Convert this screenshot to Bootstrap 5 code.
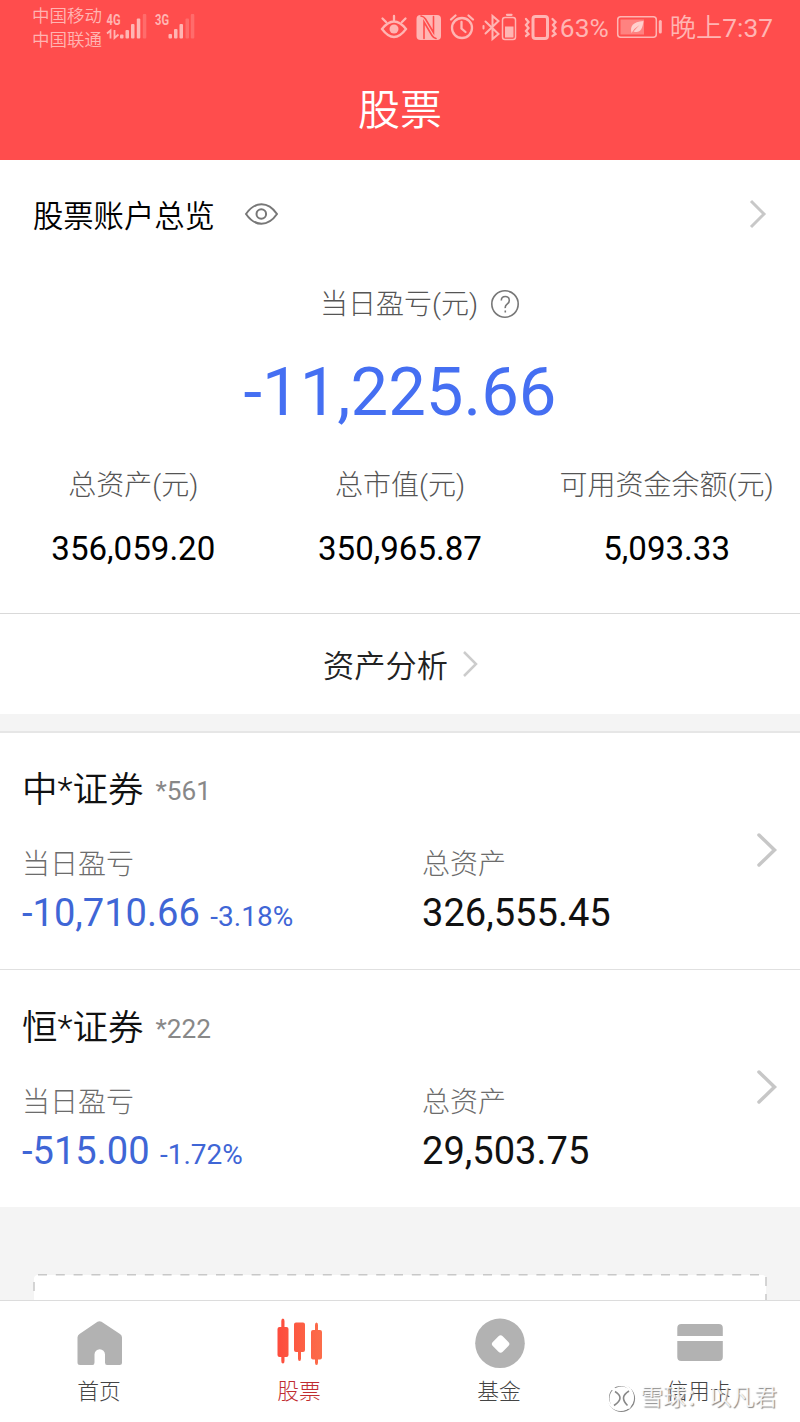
<!DOCTYPE html>
<html lang="zh-CN">
<head>
<meta charset="utf-8">
<meta name="viewport" content="width=device-width, initial-scale=1">
<title>股票</title>
<link href="https://cdn.jsdelivr.net/npm/bootstrap@5.3.0/dist/css/bootstrap.min.css" rel="stylesheet">
<style>
body{font-family:Roboto,"Noto Sans CJK SC",sans-serif;font-weight:350;color:#111;background:#f4f4f4;line-height:1}
svg{display:block;flex:none}
.screen{width:800px;height:1422px;overflow:hidden}
.topbar{height:160px;background:#ff4d4d}
.status{height:56px;color:#ffb5b3;padding:0 27px 0 32px}
.carriers{font-size:17.5px;line-height:24px;padding-top:4px}
.clock{font-size:26.3px;line-height:56px}
.num{font-weight:400}
.page-title{font-size:42px;line-height:60px;padding-top:25px;color:#fff;font-weight:350}
.overview{height:453px}
.overview-head{height:108px;padding:0 33px}
.overview-title{font-size:30.3px;line-height:40px;padding-top:5px;color:#000}
.daily{padding:19px 0 0 40px}
.daily svg{margin-left:12px}
.gray{color:#555}
.soft{color:#6c6c6c}
.label28{font-size:28px;line-height:36px;font-weight:300}
.total{font-size:67px;line-height:80px;font-weight:400;color:#456ff2;padding-top:29px}
.figures{padding-top:36px}
.amount{font-size:33.1px;line-height:40px;font-weight:400;color:#000;padding-top:25px}
.analysis{height:101px;border-top:1px solid #d9d9d9;font-size:31.2px;line-height:40px;color:#222}
.analysis span{padding:5px 0 0 2px}
.analysis svg{margin-left:13px}
.gap-band{height:19px;border-bottom:2px solid #e6e6e6}
.account{padding:0 22px;height:236px}
.account+.account{height:238px;border-top:1px solid #e0e0e0;padding-top:1px}
.acc-col{flex:0 0 400px}
.acc-arrow{right:21px;top:98px}
.acc-name{font-size:35.5px;line-height:44px;padding-top:35px}
.acc-no{font-size:26.2px;font-weight:400;color:#888;padding-top:1px}
.acc-label{padding-top:34px}
.acc-val{font-size:38.1px;line-height:46px;font-weight:400;padding-top:7px}
.loss{color:#3f66d6}
.pct{font-size:28px;margin-left:1px}
.filler{height:93px;padding:67px 33px 0}
.tabs{height:122px;border-top:1px solid #dcdcdc;font-size:21.8px;line-height:30px;color:#444;font-weight:300}
.tabs span{display:block;margin-left:-2px}
.tabs .tab-on{color:#c02b30}
.watermark{right:23px;bottom:8px;font-size:22.8px;line-height:32px;color:rgba(255,255,255,.85);text-shadow:1px 1px 1px #888;font-weight:400}
</style>
</head>
<body>
<div class="screen d-flex flex-column position-relative">
  <header class="topbar flex-shrink-0">
    <div class="status d-flex justify-content-between">
      <div class="d-flex">
        <div class="carriers"><div>中国移动</div><div>中国联通</div></div>
        <svg width="100" height="56" viewBox="102 0 100 56" fill="#ffb5b3">
          <text x="106.5" y="24.500" font-size="14" font-weight="700" textLength="14" lengthAdjust="spacingAndGlyphs">4G</text>
          <text x="155" y="24.500" font-size="14" font-weight="700" textLength="14" lengthAdjust="spacingAndGlyphs">3G</text>
          <path d="M107 33.500l3.500-3v8M114.500 30v8l4-3.500" fill="none" stroke="#ffb5b3" stroke-width="1.800"/>
          <rect x="120" y="34.500" width="3.500" height="4" rx="1"/><rect x="125.500" y="30" width="3.500" height="8.500" rx="1"/><rect x="131" y="24" width="3.500" height="14.500" rx="1"/><rect x="136.800" y="18.500" width="3.500" height="20" rx="1"/><rect x="142.800" y="14" width="3.500" height="24.500" rx="1" opacity=".3"/>
          <rect x="168.500" y="34" width="3.500" height="4.500" rx="1"/><rect x="174" y="29" width="3.500" height="9.500" rx="1"/><rect x="179.500" y="24" width="3.500" height="14.500" rx="1"/><rect x="185.500" y="18.500" width="3.500" height="20" rx="1" opacity=".3"/><rect x="190.800" y="14" width="3.500" height="24.500" rx="1" opacity=".3"/>
        </svg>
      </div>
      <div class="d-flex clock">
        <svg width="180" height="56" viewBox="380 0 180 56" fill="none" stroke="#ffb5b3" stroke-width="2.300" stroke-linecap="round">
          <path d="M382 29q12-15 24 0q-12 16-24 0zM394 20v-4M386 22l-3.500-3.500M402 22l3.500-3.500"/><circle cx="394" cy="29" r="4.500" fill="#ffb5b3" stroke="none"/>
          <rect x="416.500" y="15" width="24.500" height="25" rx="4" fill="#ffb5b3" stroke="none"/>
          <path d="M424 38.500V22l8 13.500q1.500 2.500 4 3M421 16q3 .5 4.500 3l8 13.500V16.500" stroke="#ff4d4d" stroke-width="1.600"/>
          <circle cx="462" cy="28" r="10"/><path d="M461.500 22v6.500l4 3.500M451 19.500l4.500-4M473 19.500l-4.500-4"/>
          <path d="M485.500 21.500l13 12.500-6 5V16l6 5-13 12.500" stroke-width="2"/><path d="M483.500 26v2.500" stroke-width="2"/>
          <rect x="502.500" y="17.500" width="13" height="22" rx="2.500" stroke-width="1.500"/><rect x="505" y="26.500" width="8.500" height="11" fill="#ffb5b3" stroke="none"/><path d="M507 14.800h4.500"/>
          <rect x="533" y="16.500" width="14.500" height="22" rx="2.500" stroke-width="3"/><path d="M526 19l2.500 3-2.500 3 2.500 3-2.500 3 2.500 3-2.500 2M552.500 19l3 3-2.500 3 2.500 3-2.500 3 2.500 3-3 2"/>
        </svg>
        <span class="num">63%</span>
        <svg width="61" height="56" viewBox="608 0 61 56" fill="none" stroke="#ffb5b3" stroke-width="1.500">
          <rect x="616.700" y="16.700" width="38.600" height="20.600" rx="3"/><rect x="619.500" y="19.500" width="23.500" height="15" fill="#ff8280" stroke="none"/><path d="M659.300 21.500v10.500" stroke-width="3" stroke-linecap="round"/>
          <path d="M630.500 33c-1.500-7 1-11 12-12-1 9-4 12.500-10 10.500l6-6.500q-5 3-8 8" fill="#ffd0cd" stroke="none"/>
        </svg>
        <span>晚上<span class="num">7:37</span></span>
      </div>
    </div>
    <h1 class="page-title text-center m-0">股票</h1>
  </header>

  <main>
    <section class="overview bg-white">
      <div class="overview-head d-flex align-items-center">
        <span class="overview-title">股票账户总览</span>
        <svg class="ms-4" width="42" height="30" viewBox="239 199 42 30" fill="none" stroke="#777" stroke-width="2"><path d="M246 214c9-13 22-13 31 0c-9 13-22 13-31 0z"/><circle cx="261.300" cy="214" r="4.800"/></svg>
        <svg class="ms-auto" width="20" height="30" viewBox="0 0 20 30" fill="none" stroke="#c8c8c8" stroke-width="3"><path d="M4 2l13 13L4 28"/></svg>
      </div>
      <div class="daily d-flex justify-content-center align-items-center gray label28">
        <span>当日盈亏(元)</span>
        <svg width="30" height="30" viewBox="0 0 30 30" fill="none" stroke="#777" stroke-width="1.600"><circle cx="15" cy="14" r="13.200"/><path d="M11.300 10.500q0-4 4-4t4 4q0 2-2.200 3.600t-1.800 4M15.300 20.500v2"/></svg>
      </div>
      <div class="total text-center">-11,225.66</div>
      <div class="figures row g-0 text-center label28 gray">
        <div class="col-4">总资产(元)<div class="amount">356,059.20</div></div>
        <div class="col-4">总市值(元)<div class="amount">350,965.87</div></div>
        <div class="col-4">可用资金余额(元)<div class="amount">5,093.33</div></div>
      </div>
    </section>
    <section class="analysis bg-white d-flex justify-content-center align-items-center">
      <span>资产分析</span>
      <svg width="18" height="28" viewBox="0 0 18 28" fill="none" stroke="#ccc" stroke-width="2.500"><path d="M3 2l12 12L3 26"/></svg>
    </section>
    <div class="gap-band"></div>

    <section class="account bg-white position-relative">
      <div class="acc-name d-flex align-items-start"><span>中*证券</span><span class="acc-no ms-2 ps-1">*561</span></div>
      <div class="row g-0">
        <div class="acc-col"><div class="label28 soft acc-label">当日盈亏</div><div class="acc-val loss">-10,710.66 <span class="pct">-3.18%</span></div></div>
        <div class="col"><div class="label28 soft acc-label">总资产</div><div class="acc-val">326,555.45</div></div>
      </div>
      <svg class="position-absolute acc-arrow" width="24" height="38" viewBox="0 0 24 38" fill="none" stroke="#c7c7c7" stroke-width="3.500" stroke-linecap="round"><path d="M4 4l15.500 15L4 34"/></svg>
    </section>
    <section class="account bg-white position-relative">
      <div class="acc-name d-flex align-items-start"><span>恒*证券</span><span class="acc-no ms-2 ps-1">*222</span></div>
      <div class="row g-0">
        <div class="acc-col"><div class="label28 soft acc-label">当日盈亏</div><div class="acc-val loss">-515.00 <span class="pct">-1.72%</span></div></div>
        <div class="col"><div class="label28 soft acc-label">总资产</div><div class="acc-val">29,503.75</div></div>
      </div>
      <svg class="position-absolute acc-arrow" width="24" height="38" viewBox="0 0 24 38" fill="none" stroke="#c7c7c7" stroke-width="3.500" stroke-linecap="round"><path d="M4 4l15.500 15L4 34"/></svg>
    </section>
    <div class="filler">
      <svg width="734" height="26" viewBox="0 0 734 26"><path d="M1 27V5q0-4 4-4h724q4 0 4 4v22" fill="#fff"/><path d="M5 .8h724M1 8v10M733 3v10M733 20v6" fill="none" stroke="#c8c8c8" stroke-width="1.500" stroke-dasharray="9 8.800"/></svg>
    </div>
  </main>

  <nav class="tabs bg-white row g-0 text-center flex-shrink-0">
    <div class="col"><svg class="mx-auto" width="60" height="76" viewBox="70 1301 60 76" fill="#b2b2b2"><path d="M97.500 1321.800q2-1.200 4 0L120 1334q2 1.300 2 3.500v25q0 2.500-2.500 2.500H107q-2 0-2-2.500v-8a5 5 0 0 0-10.500 0v8q0 2.500-2 2.500H80q-2.500 0-2.500-2.500v-25q0-2.200 2-3.500z"/></svg><span>首页</span></div>
    <div class="col tab-on"><svg class="mx-auto" width="60" height="76" viewBox="270 1301 60 76"><defs><linearGradient id="candle" x1="0" x2="1"><stop stop-color="#fd4c3d"/><stop offset="1" stop-color="#fc6d4a"/></linearGradient></defs><path fill="url(#candle)" d="M281.300 1321q0-2.500 1.600-2.500t1.600 2.500v6h2q2 0 2 2v26q0 2-2 2h-2v4q0 2.500-1.600 2.500t-1.600-2.500v-4h-1.800q-2 0-2-2v-26q0-2 2-2h1.800zM296 1322.500h7q2 0 2 2v25.500q0 2-2 2h-2v6.500q0 2.500-1.500 2.500t-1.500-2.500v-6.500h-2q-2 0-2-2v-25.500q0-2 2-2zM315 1325q0-2.500 1.500-2.500t1.500 2.500v5h2q2 0 2 2v25.500q0 2-2 2h-2v3q0 2.500-1.500 2.500t-1.500-2.500v-3h-2q-2 0-2-2v-25.500q0-2 2-2h2z"/></svg><span>股票</span></div>
    <div class="col"><svg class="mx-auto" width="60" height="76" viewBox="470 1301 60 76"><circle cx="500" cy="1343.300" r="24.800" fill="#b2b2b2"/><rect x="493.600" y="1337" width="14" height="14" rx="3" transform="rotate(45 500.600 1344)" fill="#fff"/></svg><span>基金</span></div>
    <div class="col"><svg class="mx-auto" width="60" height="76" viewBox="670 1301 60 76" fill="#b2b2b2"><path d="M677.300 1336v-8q0-4 4-4h37.500q4 0 4 4v8zM677.300 1341h45.500v16q0 4-4 4h-37.500q-4 0-4-4z"/></svg><span>信用卡</span></div>
  </nav>

  <div class="watermark position-absolute d-flex align-items-center">
    <svg class="me-1" width="30" height="30" viewBox="0 0 30 30" fill="none"><circle cx="15.500" cy="15.500" r="12.800" stroke="#888" stroke-width="1.600"/><circle cx="14.500" cy="14.500" r="12.500" stroke="#fff" stroke-width="2"/><path d="M5 5q9 3 9 9 0 6-9 9M25 6q-8 3-8 8 0 5 7 11" stroke="#fff" stroke-width="3"/><path d="M9 8.500q5 3 5 6.500t-6 7.500M23 8q-5.500 3.500-5.500 7t4 7.500" stroke="#888" stroke-width="1.600"/></svg>
    <span>雪球：以凡君</span>
  </div>
</div>
<script src="https://cdn.jsdelivr.net/npm/bootstrap@5.3.0/dist/js/bootstrap.bundle.min.js"></script>
</body>
</html>
